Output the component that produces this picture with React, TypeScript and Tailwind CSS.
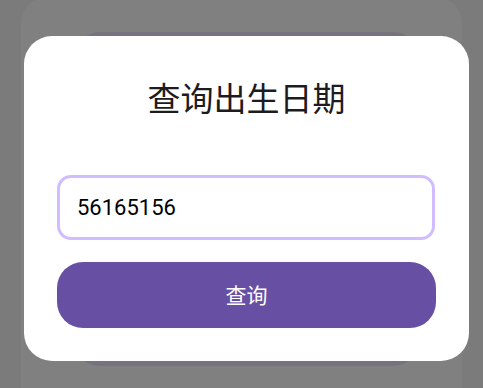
export default function App() {
  return (
    <div className="h-[388px] overflow-hidden bg-[#7b7b7b] px-[21px] font-['Roboto','Noto_Sans_CJK_SC',sans-serif]">
      <div className="-mt-[3px] h-[420px] rounded-t-[26px] bg-[#808080] pt-[39px]">
        <div className="relative ml-[3px] w-[445px]">
          <div className="absolute -top-[4px] -bottom-[5px] left-[48px] right-[48px] rounded-[28px] bg-[#76727e]" />
          <div className="relative flex h-[325px] flex-col rounded-[28px] bg-white px-[33px] pt-[41px]">
            <h2 className="text-center text-[33px] font-normal leading-[40px] text-[#1d1b20] font-['Noto_Sans_CJK_SC',sans-serif]">
              查询出生日期
            </h2>
            <div className="mt-[58px] flex h-[65px] w-[378px] items-center rounded-[14px] border-[3px] border-[#d0bcff] pl-[17px]">
              <span className="text-[22px] leading-none text-black">56165156</span>
            </div>
            <button className="mt-[22px] flex h-[66px] w-[379px] items-center justify-center rounded-[26px] bg-[#6750a4] text-[21px] text-white font-['Noto_Sans_CJK_SC',sans-serif]">
              查询
            </button>
          </div>
        </div>
      </div>
    </div>
  );
}
